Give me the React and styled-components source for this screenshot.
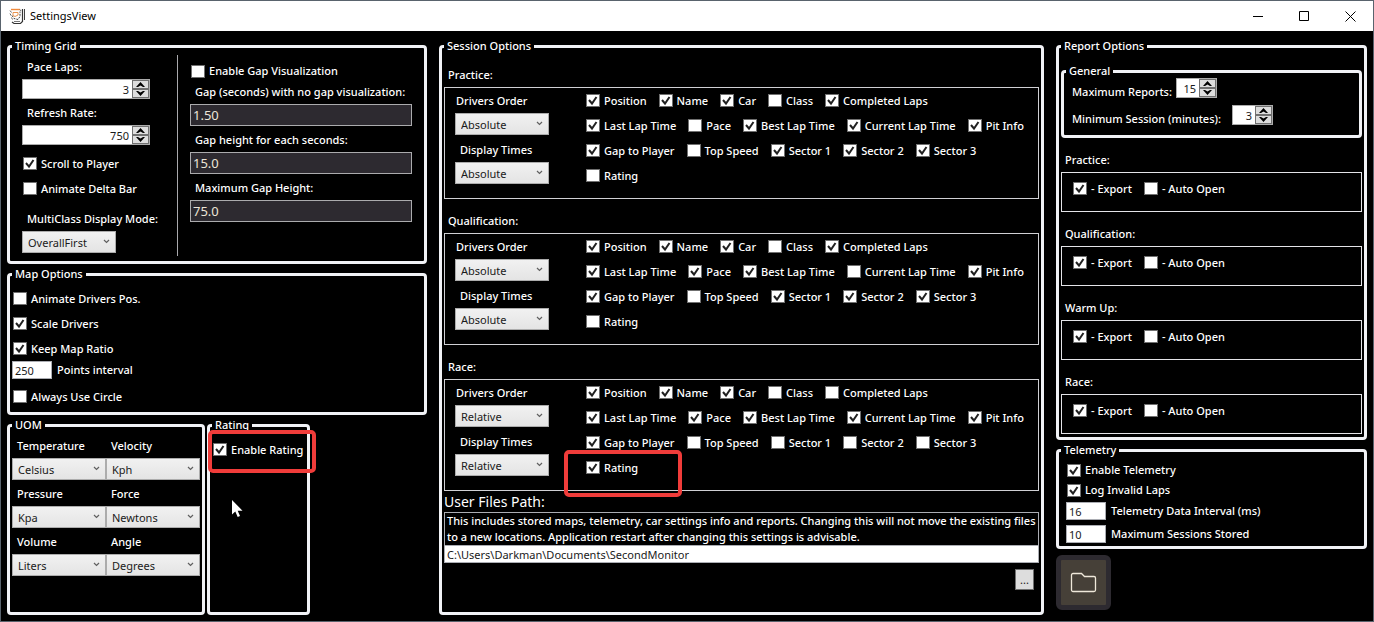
import React, { useId } from "react";
import styled, { createGlobalStyle } from "styled-components";

const FONT = '"Noto Sans", "Open Sans", "Liberation Sans", sans-serif';

const GlobalStyle = createGlobalStyle`
  *, *::before, *::after { box-sizing: border-box; }
  body { margin: 0; background: #000; }
  body, button, input, select { font-family: ${FONT}; font-size: 11px; }
`;

const Window = styled.div`
  min-height: 100vh;
  display: flex;
  flex-direction: column;
  background: #000;
  color: #fff;
  border: 1px solid #59636d;
  font-weight: 500;
  line-height: 16px;
`;

const TitleBar = styled.header`
  display: flex;
  align-items: center;
  height: 30px;
  padding-left: 8px;
  background: #fff;
  color: #000;
`;

const WindowTitle = styled.h1`
  flex: 1;
  margin: 0 0 0 4px;
  font-size: 11px;
  font-weight: 400;
`;

const CaptionButton = styled.button`
  display: grid;
  place-items: center;
  width: 46px;
  height: 30px;
  padding: 0;
  border: 0;
  background: transparent;
`;

const Columns = styled.main`
  flex: 1;
  display: grid;
  grid-template-columns: minmax(0, 420fr) minmax(0, 605fr) minmax(0, 311fr);
  column-gap: 12px;
  padding: 9px 6px 6px;
`;

const Stack = styled.div`
  display: flex;
  flex-direction: column;
  gap: 4px;
`;

const GroupFrame = styled.fieldset`
  position: relative;
  min-width: 0;
  margin: 0;
  padding: ${(p) => p.$pad || "0 2px 3px"};
  border: 3px solid #f1f2f6;
  border-radius: 4px;
  ${(p) => p.$width && `width: ${p.$width}px;`}
`;

const Legend = styled.legend`
  height: 13px;
  padding: 0 3px;
  line-height: 12px;
`;

const SplitPane = styled.div`
  display: flex;
  padding-top: 2px;
`;

const Pane = styled.div`
  flex: ${(p) => (p.$width ? `0 0 ${p.$width}px` : "1")};
  padding: ${(p) => p.$pad};
  border-right: ${(p) => (p.$divider ? "1px solid #a9a9ad" : "0")};
`;

const FieldLabel = styled.label`
  display: block;
  height: 24px;
  padding-left: ${(p) => p.$indent ?? 5}px;
  line-height: 24px;
  white-space: nowrap;
  * + & { margin-top: ${(p) => p.$gap ?? 2}px; }
`;

const CheckLabel = styled.label`
  display: flex;
  align-items: center;
  gap: 4px;
  height: ${(p) => p.$height || 25}px;
  white-space: nowrap;
`;

const CheckCell = styled.span`
  display: grid;
  width: 14px;
  height: 13px;
  > * { grid-area: 1 / 1; }
  svg { pointer-events: none; visibility: hidden; }
  input:checked + svg { visibility: visible; }
`;

const CheckInput = styled.input`
  appearance: none;
  width: 14px;
  height: 13px;
  margin: 0;
  border: 1px solid #707070;
  background: #fff;
`;

const SelectCell = styled.span`
  display: grid;
  width: 94px;
  height: 22px;
  > * { grid-area: 1 / 1; }
  svg { justify-self: end; margin: 8px 6px 0 0; pointer-events: none; }
`;

const SelectInput = styled.select`
  appearance: none;
  width: 100%;
  height: 22px;
  padding: 0 16px 0 5px;
  border: 1px solid #acacac;
  border-radius: 0;
  background: linear-gradient(#f1f1f1, #e4e4e4);
  color: #1a1a1a;
`;

const DarkInput = styled.input`
  display: block;
  width: 100%;
  height: 22px;
  padding: 0 2px;
  border: 1px solid #ababad;
  background: #2d2a30;
  color: #ece5d8;
  font-size: 13px;
`;

const LightInput = styled.input`
  width: ${(p) => p.$width || "40px"};
  height: 18px;
  padding: 0 2px;
  border: 1px solid #abadb3;
  background: #fff;
  color: #1a1a1a;
`;

const SpinnerFrame = styled.span`
  display: flex;
  width: ${(p) => p.$width}px;
  height: 20px;
  border: 1px solid #acacac;
  background: #fff;
`;

const SpinnerInput = styled.input`
  flex: 1;
  min-width: 0;
  padding: 0 3px;
  border: 0;
  background: transparent;
  color: #1a1a1a;
  text-align: right;
`;

const SpinnerButtons = styled.span`
  display: grid;
  grid-template-rows: 1fr 1fr;
  width: 17px;
`;

const SpinnerButton = styled.button`
  display: grid;
  place-items: center;
  padding: 0;
  border: 1px solid #707070;
  background: #dddddd;
`;

const InputRow = styled.div`
  display: flex;
  align-items: center;
  gap: 5px;
  margin-bottom: ${(p) => p.$after || 0}px;
`;

const CheckList = styled.div`
  padding: ${(p) => p.$pad};
`;

const Inset = styled.div`
  padding: ${(p) => p.$pad};
`;

const UnitRow = styled.div`
  display: flex;
  gap: 2px;
  flex: 1;
`;

const UnitGrid = styled.div`
  display: grid;
  grid-template-columns: 94px 94px;
  row-gap: 2px;
  padding-top: 2px;
`;

const BoxTitle = styled.h2`
  height: 24px;
  margin: 0;
  padding-left: ${(p) => p.$indent}px;
  font-size: 11px;
  font-weight: 500;
  line-height: 24px;
  * + & { margin-top: 10px; }
`;

const SessionBox = styled.section`
  display: flex;
  height: 112px;
  padding-left: 10px;
  border: 1px solid #d0d0d4;
`;

const OrderColumn = styled.div`
  width: 131px;
  padding-top: 1px;
`;

const CheckRow = styled.div`
  display: flex;
  gap: 12px;
`;

const PathTitle = styled.label`
  display: block;
  height: 21px;
  font-size: 14px;
  font-weight: 400;
  line-height: 22px;
`;

const PathNote = styled.p`
  margin: 0;
  padding: 0 2px;
  border: 1px solid #abadb3;
  border-bottom: 0;
`;

const BrowseRow = styled.div`
  display: flex;
  justify-content: flex-end;
  padding: 6px 5px 0;
`;

const BrowseButton = styled.button`
  width: 19px;
  height: 21px;
  padding: 0;
  border: 1px solid #707070;
  background: #ddd;
  color: #1a1a1a;
`;

const GeneralRow = styled.div`
  display: flex;
  align-items: flex-start;
  height: 27px;
`;

const GeneralLabel = styled.label`
  width: ${(p) => p.$width}px;
  line-height: 27px;
  white-space: nowrap;
`;

const ReportBox = styled.section`
  display: flex;
  gap: 12px;
  height: 40px;
  padding: 3px 11px;
  border: 1px solid #e4e4e8;
`;

const FolderButton = styled.button`
  display: grid;
  place-items: center;
  width: 55px;
  height: 55px;
  margin-top: 2px;
  padding: 0;
  border: 5px solid #2d2a30;
  border-radius: 6px;
  background: #464038;
`;

const Highlight = styled.div`
  position: absolute;
  left: ${(p) => p.$left}px;
  top: ${(p) => p.$top}px;
  width: ${(p) => p.$width}px;
  height: ${(p) => p.$height}px;
  border: 4px solid #f03c3a;
  border-radius: 5px;
  pointer-events: none;
`;

const Pointer = styled.svg`
  position: absolute;
  left: 21px;
  top: 67px;
  pointer-events: none;
`;

const RatingItem = styled.div`
  position: relative;
`;

function AppIcon() {
  return (
    <svg width="17" height="17" viewBox="0 0 17 17" fill="none" aria-hidden="true">
      <path d="M2 1.500h9" stroke="#f08a3c" strokeWidth="1.400" />
      <path d="M1 2.500l1.500 2M11 1.500l1 1.500M1 5.500l1 2M2.500 9.500l1 2" stroke="#666" />
      <path d="M4 4.500h5v2.500l-3 1.500-2-1z" stroke="#e9944f" />
      <path d="M3 7.500l2 3 4 1 2-3V3.500" stroke="#444" strokeDasharray="2 1" />
      <path d="M13.500 1v12.500l-2 2H5l-2-1.500" stroke="#333" strokeWidth="1.200" />
      <path d="M15.500 1v11" stroke="#444" />
      <path d="M5 13.500h6" stroke="#777" />
    </svg>
  );
}

function Check({ label, on = false, height }) {
  return (
    <CheckLabel $height={height}>
      <CheckCell>
        <CheckInput type="checkbox" defaultChecked={on} />
        <svg width="14" height="13" viewBox="0 0 14 13" fill="none" aria-hidden="true">
          <path d="M3 6l3 3.500L10.500 3" stroke="#212121" strokeWidth="2" />
        </svg>
      </CheckCell>
      {label}
    </CheckLabel>
  );
}

function Select({ id, value }) {
  return (
    <SelectCell>
      <SelectInput id={id} defaultValue={value}>
        <option>{value}</option>
      </SelectInput>
      <svg width="7" height="5" viewBox="0 0 7 5" fill="none" aria-hidden="true">
        <path d="M1 1l2.500 2.500L6 1" stroke="#606060" strokeWidth="1.200" />
      </svg>
    </SelectCell>
  );
}

function Spinner({ id, value, width }) {
  return (
    <SpinnerFrame $width={width}>
      <SpinnerInput id={id} defaultValue={value} />
      <SpinnerButtons>
        <SpinnerButton type="button" aria-label="Increase">
          <svg width="9" height="5" viewBox="0 0 9 5" aria-hidden="true">
            <path d="M0 5l4.500-5L9 5H7L4.500 3.500 2 5z" fill="#000" />
          </svg>
        </SpinnerButton>
        <SpinnerButton type="button" aria-label="Decrease">
          <svg width="9" height="5" viewBox="0 0 9 5" aria-hidden="true">
            <path d="M0 0l4.500 5L9 0H7L4.500 1.500 2 0z" fill="#000" />
          </svg>
        </SpinnerButton>
      </SpinnerButtons>
    </SpinnerFrame>
  );
}

function LabeledSelect({ label, value, indent, gap }) {
  const id = useId();
  return (
    <>
      <FieldLabel htmlFor={id} $indent={indent} $gap={gap}>{label}</FieldLabel>
      <Select id={id} value={value} />
    </>
  );
}

function LabeledSpinner({ label, value }) {
  const id = useId();
  return (
    <>
      <FieldLabel htmlFor={id}>{label}</FieldLabel>
      <Spinner id={id} value={value} width={128} />
    </>
  );
}

function LabeledDark({ label, value, gap }) {
  const id = useId();
  return (
    <>
      <FieldLabel htmlFor={id} $gap={gap}>{label}</FieldLabel>
      <DarkInput id={id} defaultValue={value} />
    </>
  );
}

function NumberRow({ label, value, after }) {
  const id = useId();
  return (
    <InputRow $after={after}>
      <LightInput id={id} defaultValue={value} />
      <label htmlFor={id}>{label}</label>
    </InputRow>
  );
}

function Group({ title, children, ...rest }) {
  return (
    <GroupFrame {...rest}>
      <Legend>{title}</Legend>
      {children}
    </GroupFrame>
  );
}

const OPTION_ROWS = [
  ["Position", "Name", "Car", "Class", "Completed Laps"],
  ["Last Lap Time", "Pace", "Best Lap Time", "Current Lap Time", "Pit Info"],
  ["Gap to Player", "Top Speed", "Sector 1", "Sector 2", "Sector 3"],
  ["Rating"],
];

const SESSIONS = [
  { name: "Practice:", mode: "Absolute", off: ["Class", "Pace", "Top Speed", "Rating"] },
  { name: "Qualification:", mode: "Absolute", off: ["Class", "Current Lap Time", "Top Speed", "Rating"] },
  {
    name: "Race:",
    mode: "Relative",
    off: ["Class", "Completed Laps", "Top Speed", "Sector 1", "Sector 2", "Sector 3"],
    highlight: true,
  },
];

const UNITS = [
  ["Temperature", "Celsius", "Velocity", "Kph"],
  ["Pressure", "Kpa", "Force", "Newtons"],
  ["Volume", "Liters", "Angle", "Degrees"],
];

function Session({ session }) {
  return (
    <>
      <BoxTitle $indent={4}>{session.name}</BoxTitle>
      <SessionBox>
        <OrderColumn>
          <LabeledSelect label="Drivers Order" value={session.mode} indent={1} />
          <LabeledSelect label="Display Times" value={session.mode} gap={3} />
        </OrderColumn>
        <div>
          {OPTION_ROWS.map((row) => (
            <CheckRow key={row[0]}>
              {row.map((name) =>
                name === "Rating" && session.highlight ? (
                  <RatingItem key={name}>
                    <Check label={name} on />
                    <Highlight $left={-22} $top={-5} $width={118} $height={47} />
                  </RatingItem>
                ) : (
                  <Check key={name} label={name} on={!session.off.includes(name)} />
                )
              )}
            </CheckRow>
          ))}
        </div>
      </SessionBox>
    </>
  );
}

export default function App() {
  return (
    <Window>
      <GlobalStyle />
      <TitleBar>
        <AppIcon />
        <WindowTitle>SettingsView</WindowTitle>
        <CaptionButton type="button" aria-label="Minimize">
          <svg width="11" height="11" viewBox="0 0 11 11" stroke="#000"><path d="M0 5.500h10" /></svg>
        </CaptionButton>
        <CaptionButton type="button" aria-label="Maximize">
          <svg width="11" height="11" viewBox="0 0 11 11" stroke="#000" fill="none"><path d="M.5.5h9v9h-9z" /></svg>
        </CaptionButton>
        <CaptionButton type="button" aria-label="Close">
          <svg width="11" height="11" viewBox="0 0 11 11" stroke="#000"><path d="M.5.5l10 10M10.500.5l-10 10" /></svg>
        </CaptionButton>
      </TitleBar>

      <Columns>
        <Stack>
          <Group title="Timing Grid" $pad="0 2px 5px">
            <SplitPane>
              <Pane $width={166} $pad="0 0 3px 10px" $divider>
                <LabeledSpinner label="Pace Laps:" value="3" />
                <LabeledSpinner label="Refresh Rate:" value="750" />
                <CheckList $pad="6px 0 0 1px">
                  <Check label="Scroll to Player" on />
                  <Check label="Animate Delta Bar" />
                </CheckList>
                <LabeledSelect label="MultiClass Display Mode:" value="OverallFirst" gap={6} />
              </Pane>
              <Pane $pad="7px 10px 0 12px">
                <CheckList $pad="0 0 0 1px">
                  <Check label="Enable Gap Visualization" height={18} />
                </CheckList>
                <LabeledDark label="Gap (seconds) with no gap visualization:" value="1.50" gap={0} />
                <LabeledDark label="Gap height for each seconds:" value="15.0" />
                <LabeledDark label="Maximum Gap Height:" value="75.0" />
              </Pane>
            </SplitPane>
          </Group>

          <Group title="Map Options">
            <CheckList $pad="5px 1px 0">
              <Check label="Animate Drivers Pos." />
              <Check label="Scale Drivers" on />
              <Check label="Keep Map Ratio" on />
            </CheckList>
            <NumberRow label="Points interval" value="250" after={5} />
            <CheckList $pad="0 1px">
              <Check label="Always Use Circle" />
            </CheckList>
          </Group>

          <UnitRow>
            <Group title="UOM" $width={198}>
              <UnitGrid>
                {UNITS.map(([a, av, b, bv]) => (
                  <React.Fragment key={a}>
                    <div><LabeledSelect label={a} value={av} /></div>
                    <div><LabeledSelect label={b} value={bv} /></div>
                  </React.Fragment>
                ))}
              </UnitGrid>
            </Group>
            <Group title="Rating" $width={103}>
              <CheckList $pad="5px 1px 0">
                <Check label="Enable Rating" on />
              </CheckList>
              <Highlight $left={-2} $top={-2} $width={108} $height={43} />
              <Pointer width="13" height="19" viewBox="0 0 13 19" aria-hidden="true">
                <path d="M1 1v14.500l3.300-3 2.400 5.500 2.300-1-2.300-5.300H11.500z" fill="#fff" />
              </Pointer>
            </Group>
          </UnitRow>
        </Stack>

        <Group title="Session Options">
          {SESSIONS.map((s) => (
            <Session key={s.name} session={s} />
          ))}
          <PathTitle htmlFor="files-path">User Files Path:</PathTitle>
          <PathNote>
            This includes stored maps, telemetry, car settings info and reports. Changing this will not
            move the existing files to a new locations. Application restart after changing this settings
            is advisable.
          </PathNote>
          <LightInput id="files-path" $width="100%" defaultValue="C:\Users\Darkman\Documents\SecondMonitor" />
          <BrowseRow>
            <BrowseButton type="button" aria-label="Browse">...</BrowseButton>
          </BrowseRow>
        </Group>

        <Stack>
          <Group title="Report Options" $pad="12px 2px 3px">
            <Group title="General">
              <Inset $pad="0 6px">
                <GeneralRow>
                  <GeneralLabel htmlFor="max-reports" $width={104}>Maximum Reports:</GeneralLabel>
                  <Spinner id="max-reports" value="15" width={41} />
                </GeneralRow>
                <GeneralRow>
                  <GeneralLabel htmlFor="min-session" $width={160}>Minimum Session (minutes):</GeneralLabel>
                  <Spinner id="min-session" value="3" width={41} />
                </GeneralRow>
              </Inset>
            </Group>
            {["Practice:", "Qualification:", "Warm Up:", "Race:"].map((name) => (
              <React.Fragment key={name}>
                <BoxTitle $indent={4}>{name}</BoxTitle>
                <ReportBox>
                  <Check label="- Export" on />
                  <Check label="- Auto Open" />
                </ReportBox>
              </React.Fragment>
            ))}
          </Group>
          <Group title="Telemetry">
            <Inset $pad="3px 5px 0">
              <CheckList $pad="0 1px 2px">
                <Check label="Enable Telemetry" on height={20} />
                <Check label="Log Invalid Laps" on height={20} />
              </CheckList>
              <NumberRow label="Telemetry Data Interval (ms)" value="16" after={5} />
              <NumberRow label="Maximum Sessions Stored" value="10" />
            </Inset>
          </Group>
          <FolderButton type="button" aria-label="Open folder">
            <svg width="27" height="21" viewBox="0 0 27 21" fill="none" aria-hidden="true">
              <path
                d="M3 1.500h8.500l3 3H24a1.500 1.500 0 0 1 1.500 1.500v12a1.500 1.500 0 0 1-1.500 1.500H3A1.500 1.500 0 0 1 1.500 18V3A1.500 1.500 0 0 1 3 1.500z"
                stroke="#efe8da"
                strokeWidth="1.300"
              />
            </svg>
          </FolderButton>
        </Stack>
      </Columns>
    </Window>
  );
}
